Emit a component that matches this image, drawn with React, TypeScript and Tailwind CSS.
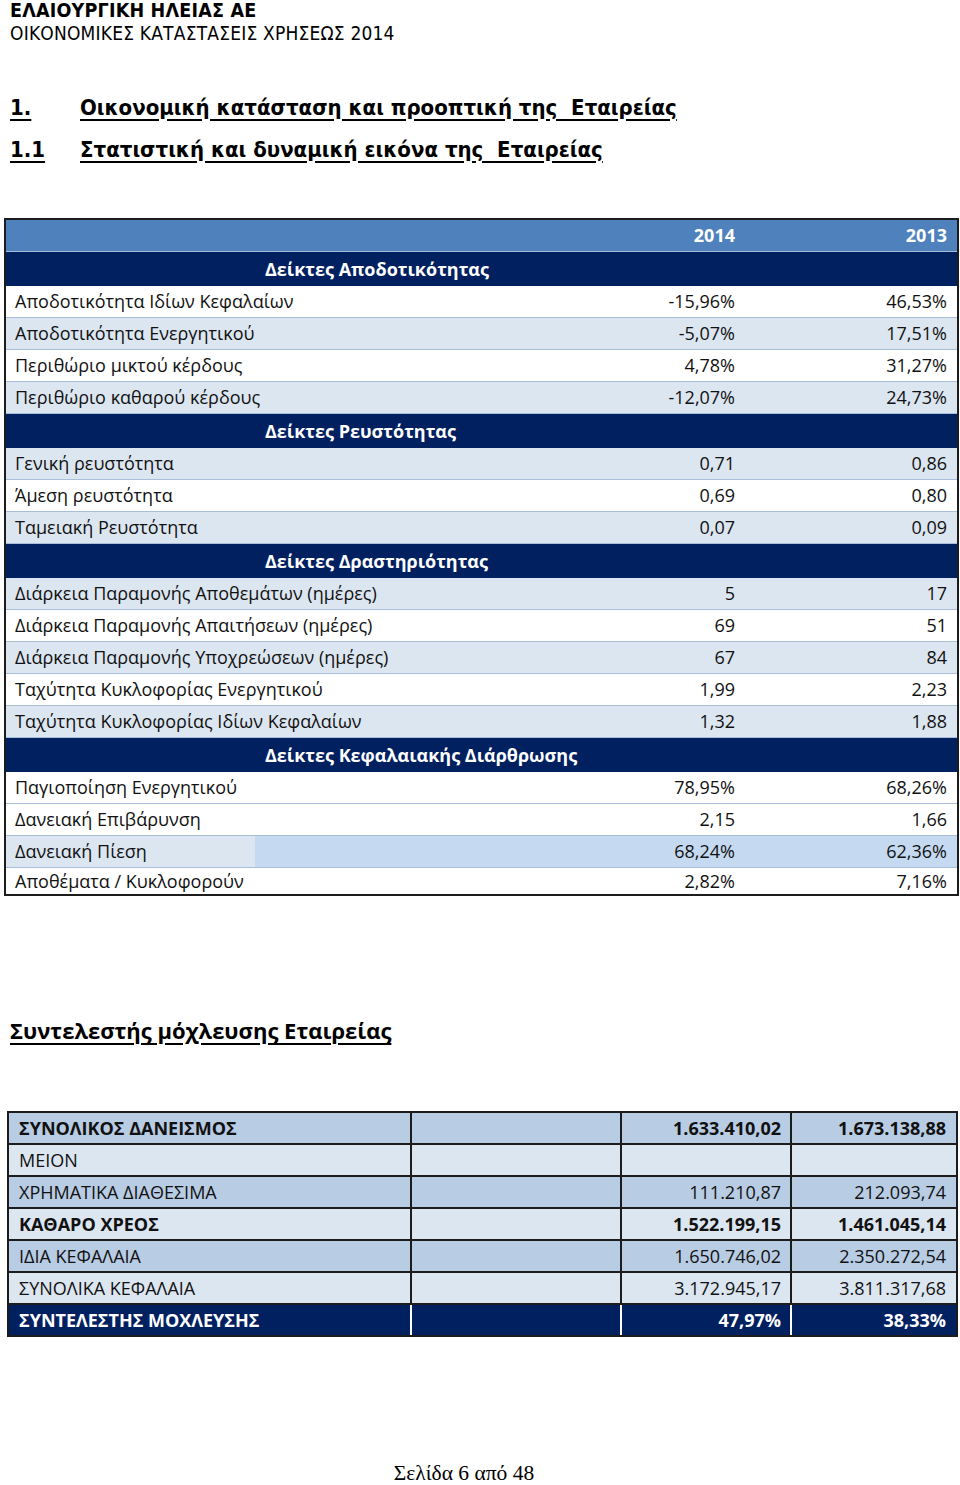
type Row = {
  kind: "row" | "section";
  label: string;
  v14?: string;
  v13?: string;
  bg?: string;
};

const rows: Row[] = [
  { kind: "section", label: "Δείκτες Αποδοτικότητας" },
  { kind: "row", label: "Αποδοτικότητα Ιδίων Κεφαλαίων", v14: "-15,96%", v13: "46,53%", bg: "bg-white" },
  { kind: "row", label: "Αποδοτικότητα Ενεργητικού", v14: "-5,07%", v13: "17,51%", bg: "bg-[#dce6f1]" },
  { kind: "row", label: "Περιθώριο μικτού κέρδους", v14: "4,78%", v13: "31,27%", bg: "bg-white" },
  { kind: "row", label: "Περιθώριο καθαρού κέρδους", v14: "-12,07%", v13: "24,73%", bg: "bg-[#dce6f1]" },
  { kind: "section", label: "Δείκτες Ρευστότητας" },
  { kind: "row", label: "Γενική ρευστότητα", v14: "0,71", v13: "0,86", bg: "bg-[#dce6f1]" },
  { kind: "row", label: "Άμεση ρευστότητα", v14: "0,69", v13: "0,80", bg: "bg-white" },
  { kind: "row", label: "Ταμειακή Ρευστότητα", v14: "0,07", v13: "0,09", bg: "bg-[#dce6f1]" },
  { kind: "section", label: "Δείκτες Δραστηριότητας" },
  { kind: "row", label: "Διάρκεια Παραμονής Αποθεμάτων (ημέρες)", v14: "5", v13: "17", bg: "bg-[#dce6f1]" },
  { kind: "row", label: "Διάρκεια Παραμονής Απαιτήσεων (ημέρες)", v14: "69", v13: "51", bg: "bg-white" },
  { kind: "row", label: "Διάρκεια Παραμονής Υποχρεώσεων (ημέρες)", v14: "67", v13: "84", bg: "bg-[#dce6f1]" },
  { kind: "row", label: "Ταχύτητα Κυκλοφορίας Ενεργητικού", v14: "1,99", v13: "2,23", bg: "bg-white" },
  { kind: "row", label: "Ταχύτητα Κυκλοφορίας Ιδίων Κεφαλαίων", v14: "1,32", v13: "1,88", bg: "bg-[#dce6f1]" },
  { kind: "section", label: "Δείκτες Κεφαλαιακής Διάρθρωσης" },
  { kind: "row", label: "Παγιοποίηση Ενεργητικού", v14: "78,95%", v13: "68,26%", bg: "bg-white" },
  { kind: "row", label: "Δανειακή Επιβάρυνση", v14: "2,15", v13: "1,66", bg: "bg-white" },
];

const leverage = [
  { label: "ΣΥΝΟΛΙΚΟΣ ΔΑΝΕΙΣΜΟΣ", a: "1.633.410,02", b: "1.673.138,88", bold: true, bg: "bg-[#b8cce4]" },
  { label: "ΜΕΙΟΝ", a: "", b: "", bold: false, bg: "bg-[#dce6f1]" },
  { label: "ΧΡΗΜΑΤΙΚΑ ΔΙΑΘΕΣΙΜΑ", a: "111.210,87", b: "212.093,74", bold: false, bg: "bg-[#b8cce4]" },
  { label: "ΚΑΘΑΡΟ ΧΡΕΟΣ", a: "1.522.199,15", b: "1.461.045,14", bold: true, bg: "bg-[#dce6f1]" },
  { label: "ΙΔΙΑ ΚΕΦΑΛΑΙΑ", a: "1.650.746,02", b: "2.350.272,54", bold: false, bg: "bg-[#b8cce4]" },
  { label: "ΣΥΝΟΛΙΚΑ ΚΕΦΑΛΑΙΑ", a: "3.172.945,17", b: "3.811.317,68", bold: false, bg: "bg-[#dce6f1]" },
];

function RatioRow({ row }: { row: Row }) {
  if (row.kind === "section") {
    return (
      <div className="flex h-[34px] items-center bg-[#002060] font-bold text-white">
        <div className="w-[249px]" />
        <div className="pl-[10px]">{row.label}</div>
      </div>
    );
  }
  return (
    <div className={`flex h-[32px] items-center border-b border-[#a9bedb] ${row.bg}`}>
      <div className="w-[249px] whitespace-nowrap pl-[9px]">{row.label}</div>
      <div className="w-[490px] pr-[10px] text-right">{row.v14}</div>
      <div className="flex-1 pr-[10px] text-right">{row.v13}</div>
    </div>
  );
}

export default function App() {
  return (
    <div className="h-[1485px] w-[960px] overflow-hidden bg-white text-black">
      <div className="pl-[10px] font-['DejaVu_Sans_Condensed','DejaVu_Sans',sans-serif]">
        <div className="text-[19.5px] font-bold leading-[22px] tracking-[0.2px]">ΕΛΑΙΟΥΡΓΙΚΗ ΗΛΕΙΑΣ ΑΕ</div>
        <div className="text-[19px] leading-[22px] tracking-[0.2px]">ΟΙΚΟΝΟΜΙΚΕΣ ΚΑΤΑΣΤΑΣΕΙΣ ΧΡΗΣΕΩΣ 2014</div>

        <h1 className="mt-[49px] flex whitespace-pre text-[22px] font-bold leading-[30px] underline underline-offset-[4px]">
          <span className="w-[70px]">1.</span>
          <span>Οικονομική κατάσταση και προοπτική της  Εταιρείας</span>
        </h1>
        <h2 className="mt-[12px] flex whitespace-pre text-[22px] font-bold leading-[30px] underline underline-offset-[4px]">
          <span className="w-[70px]">1.1</span>
          <span>Στατιστική και δυναμική εικόνα της  Εταιρείας</span>
        </h2>
      </div>

      <div className="ml-[4px] mt-[53px] w-[955px] border-2 border-[#1c1c1c] font-['Open_Sans',sans-serif] text-[18px] text-[#111]">
        <div className="flex h-[32px] items-center border-b border-[#a9bedb] bg-[#4f81bd] font-bold text-white">
          <div className="w-[249px]" />
          <div className="w-[490px] pr-[10px] text-right">2014</div>
          <div className="flex-1 pr-[10px] text-right">2013</div>
        </div>
        {rows.map((r, i) => (
          <RatioRow key={i} row={r} />
        ))}
        <div className="flex h-[32px] items-center border-b border-[#a9bedb]">
          <div className="flex h-full w-[249px] items-center bg-[#dce6f1] pl-[9px]">Δανειακή Πίεση</div>
          <div className="flex h-full w-[490px] items-center justify-end bg-[#c5d9f1] pr-[10px]">68,24%</div>
          <div className="flex h-full flex-1 items-center justify-end bg-[#c5d9f1] pr-[10px]">62,36%</div>
        </div>
        <div className="flex h-[26px] items-center bg-white">
          <div className="w-[249px] pl-[9px]">Αποθέματα / Κυκλοφορούν</div>
          <div className="w-[490px] pr-[10px] text-right">2,82%</div>
          <div className="flex-1 pr-[10px] text-right">7,16%</div>
        </div>
      </div>

      <h3 className="ml-[10px] mt-[120px] font-['Open_Sans',sans-serif] text-[22px] font-bold leading-[28px] underline underline-offset-[4px]">
        Συντελεστής μόχλευσης Εταιρείας
      </h3>

      <table className="ml-[7px] mt-[67px] w-[949px] table-fixed border-collapse border-2 border-[#1c1c1c] font-['Open_Sans',sans-serif] text-[18px] text-[#111]">
        <colgroup>
          <col className="w-[403px]" />
          <col className="w-[210px]" />
          <col className="w-[170px]" />
          <col className="w-[166px]" />
        </colgroup>
        <tbody>
          {leverage.map((r) => (
            <tr key={r.label} className={`h-[32px] ${r.bg} ${r.bold ? "font-bold" : ""}`}>
              <td className="border-2 border-[#1c1c1c] pl-[10px] leading-none">{r.label}</td>
              <td className="border-2 border-[#1c1c1c]" />
              <td className="border-2 border-[#1c1c1c] pr-[9px] text-right leading-none">{r.a}</td>
              <td className="border-2 border-[#1c1c1c] pr-[10px] text-right leading-none">{r.b}</td>
            </tr>
          ))}
          <tr className="h-[32px] bg-[#002060] font-bold text-white">
            <td className="border-y-2 border-l-2 border-r-2 border-[#1c1c1c] border-r-white pl-[10px] leading-none">
              ΣΥΝΤΕΛΕΣΤΗΣ ΜΟΧΛΕΥΣΗΣ
            </td>
            <td className="border-y-2 border-r-2 border-[#1c1c1c] border-r-white" />
            <td className="border-y-2 border-r-2 border-[#1c1c1c] border-r-white pr-[9px] text-right leading-none">47,97%</td>
            <td className="border-2 border-[#1c1c1c] pr-[10px] text-right leading-none">38,33%</td>
          </tr>
        </tbody>
      </table>

      <div className="mt-[125px] pr-[32px] text-center font-['Liberation_Serif',serif] text-[21.5px] leading-[22px]">
        Σελίδα 6 από 48
      </div>
    </div>
  );
}
